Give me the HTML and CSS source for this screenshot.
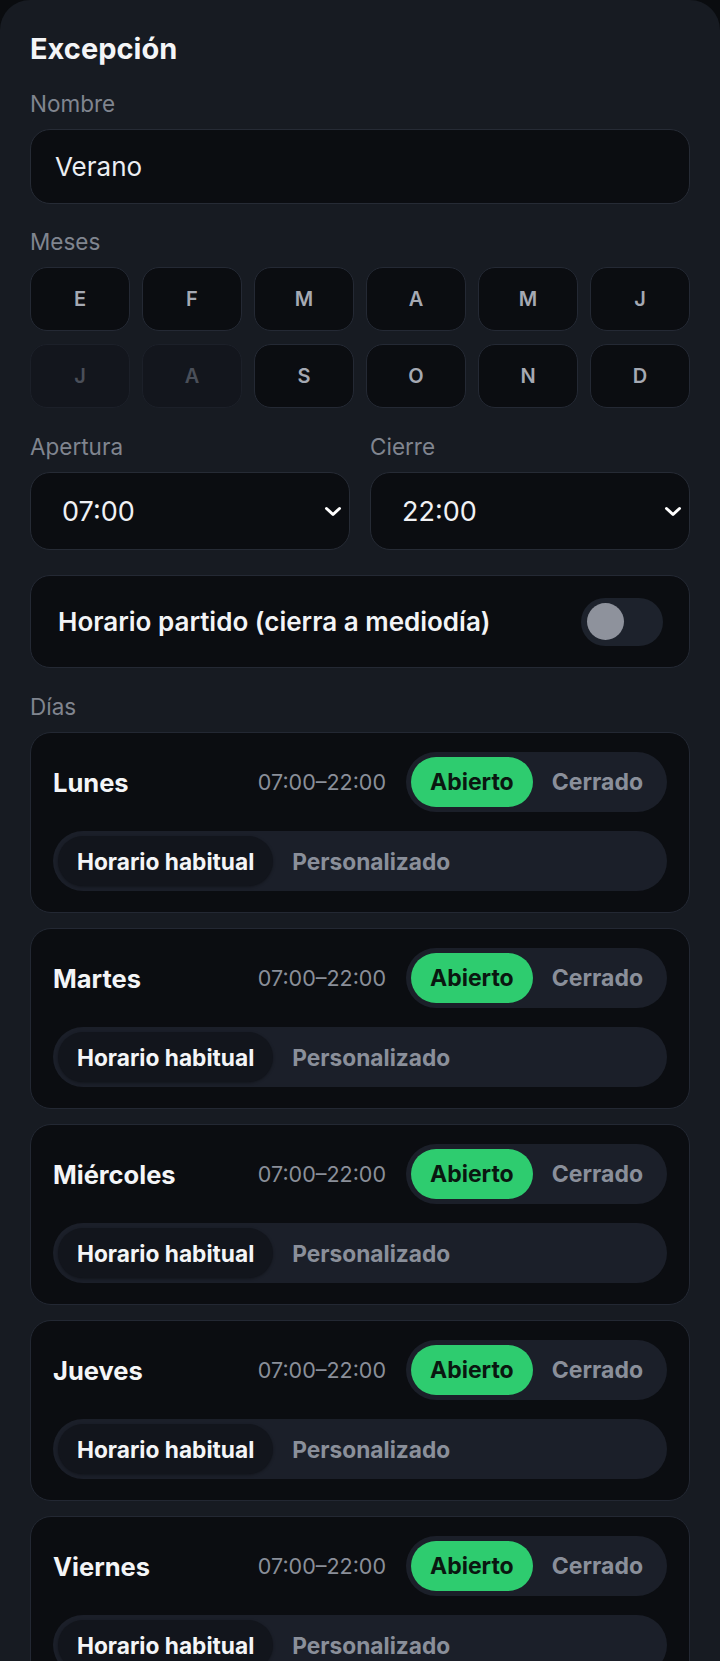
FILE: index.html
```html
<!DOCTYPE html>
<html lang="es">
<head>
    <meta charset="utf-8">
    <title>Excepción</title>
    <link rel="stylesheet" href="styles.css">
</head>
<body>
    <div class="screen">
        <section class="sheet">
            <h2 class="sheet-title">Excepción</h2>

            <div class="field">
                <div class="field-label">Nombre</div>
                <div class="text-input">Verano</div>
            </div>

            <div class="field">
                <div class="field-label">Meses</div>
                <div class="month-grid">
                    <button class="month">E</button>
                    <button class="month">F</button>
                    <button class="month">M</button>
                    <button class="month">A</button>
                    <button class="month">M</button>
                    <button class="month">J</button>
                    <button class="month off">J</button>
                    <button class="month off">A</button>
                    <button class="month">S</button>
                    <button class="month">O</button>
                    <button class="month">N</button>
                    <button class="month">D</button>
                </div>
            </div>

            <div class="field time-row">
                <div class="time-col">
                    <div class="field-label">Apertura</div>
                    <div class="select">
                        <span>07:00</span>
                        <svg class="chevron" width="18" height="11" viewBox="0 0 18 11"><path d="M2.5 2.5 L9 8.5 L15.5 2.5" fill="none" stroke="#fff" stroke-width="3" stroke-linecap="round" stroke-linejoin="round"/></svg>
                    </div>
                </div>
                <div class="time-col">
                    <div class="field-label">Cierre</div>
                    <div class="select">
                        <span>22:00</span>
                        <svg class="chevron" width="18" height="11" viewBox="0 0 18 11"><path d="M2.5 2.5 L9 8.5 L15.5 2.5" fill="none" stroke="#fff" stroke-width="3" stroke-linecap="round" stroke-linejoin="round"/></svg>
                    </div>
                </div>
            </div>

            <div class="field switch-card">
                <span>Horario partido (cierra a mediodía)</span>
                <span class="switch"><span class="knob"></span></span>
            </div>

            <div class="field days">
                <div class="field-label">Días</div>
                <div class="day-list">
                    <div class="day-card">
                        <div class="day-head">
                            <span class="day-name">Lunes</span>
                            <span class="day-hours">07:00–22:00</span>
                            <div class="seg">
                                <span class="seg-opt open">Abierto</span>
                                <span class="seg-opt">Cerrado</span>
                            </div>
                        </div>
                        <div class="seg seg-wide">
                            <span class="seg-opt on">Horario habitual</span>
                            <span class="seg-opt">Personalizado</span>
                        </div>
                    </div>
                    <div class="day-card">
                        <div class="day-head">
                            <span class="day-name">Martes</span>
                            <span class="day-hours">07:00–22:00</span>
                            <div class="seg">
                                <span class="seg-opt open">Abierto</span>
                                <span class="seg-opt">Cerrado</span>
                            </div>
                        </div>
                        <div class="seg seg-wide">
                            <span class="seg-opt on">Horario habitual</span>
                            <span class="seg-opt">Personalizado</span>
                        </div>
                    </div>
                    <div class="day-card">
                        <div class="day-head">
                            <span class="day-name">Miércoles</span>
                            <span class="day-hours">07:00–22:00</span>
                            <div class="seg">
                                <span class="seg-opt open">Abierto</span>
                                <span class="seg-opt">Cerrado</span>
                            </div>
                        </div>
                        <div class="seg seg-wide">
                            <span class="seg-opt on">Horario habitual</span>
                            <span class="seg-opt">Personalizado</span>
                        </div>
                    </div>
                    <div class="day-card">
                        <div class="day-head">
                            <span class="day-name">Jueves</span>
                            <span class="day-hours">07:00–22:00</span>
                            <div class="seg">
                                <span class="seg-opt open">Abierto</span>
                                <span class="seg-opt">Cerrado</span>
                            </div>
                        </div>
                        <div class="seg seg-wide">
                            <span class="seg-opt on">Horario habitual</span>
                            <span class="seg-opt">Personalizado</span>
                        </div>
                    </div>
                    <div class="day-card">
                        <div class="day-head">
                            <span class="day-name">Viernes</span>
                            <span class="day-hours">07:00–22:00</span>
                            <div class="seg">
                                <span class="seg-opt open">Abierto</span>
                                <span class="seg-opt">Cerrado</span>
                            </div>
                        </div>
                        <div class="seg seg-wide">
                            <span class="seg-opt on">Horario habitual</span>
                            <span class="seg-opt">Personalizado</span>
                        </div>
                    </div>
                </div>
            </div>
        </section>
    </div>
</body>
</html>
```

FILE: styles.css
```css
html, body {
    margin: 0;
    padding: 0;
    background: #0a0c0f;
}
body {
    font-family: 'Inter', 'Roboto', sans-serif;
    color: #f2f3f5;
}
.screen {
    height: 1661px;
    overflow: hidden;
}
.sheet {
    min-height: 100%;
    box-sizing: border-box;
    background: #171b22;
    border-radius: 30px 30px 0 0;
    padding: 32px 30px 0;
}
.sheet-title {
    margin: 0;
    font-size: 29px;
    line-height: 34px;
    font-weight: 700;
    color: #f4f5f7;
}
.field {
    margin-top: 26px;
}
.field-label {
    font-size: 22.5px;
    line-height: 24px;
    color: #80858f;
    margin-bottom: 13px;
}
.text-input {
    height: 75px;
    box-sizing: border-box;
    display: flex;
    align-items: center;
    padding: 0 24px;
    background: #0b0d11;
    border: 1px solid #262b35;
    border-radius: 20px;
    font-size: 26px;
    color: #eceef2;
}
/* Months */
.month-grid {
    display: grid;
    grid-template-columns: repeat(6, 1fr);
    gap: 13px 12px;
}
.month {
    height: 64px;
    padding: 0;
    background: #0b0d11;
    border: 1px solid #242934;
    border-radius: 17px;
    font-family: inherit;
    font-size: 20px;
    font-weight: 600;
    color: #a5a9b3;
}
.month.off {
    background: #13161d;
    border-color: #1c2029;
    color: #4a4f59;
}
/* Opening / closing */
.time-row {
    margin-top: 27px;
    display: grid;
    grid-template-columns: 1fr 1fr;
    gap: 20px;
}
.select {
    height: 78px;
    box-sizing: border-box;
    display: flex;
    align-items: center;
    justify-content: space-between;
    padding: 0 7px 0 31px;
    background: #0b0d11;
    border: 1px solid #262b35;
    border-radius: 20px;
    font-size: 27px;
    color: #f0f1f4;
}
.switch-card {
    margin-top: 25px;
    height: 93px;
    box-sizing: border-box;
    display: flex;
    align-items: center;
    justify-content: space-between;
    padding: 0 26px 0 27px;
    background: #0b0d11;
    border: 1px solid #242934;
    border-radius: 20px;
    font-size: 26px;
    font-weight: 600;
    color: #f3f4f6;
}
.switch {
    width: 82px;
    height: 48px;
    border-radius: 24px;
    background: #1d222c;
    display: flex;
    align-items: center;
    padding-left: 6px;
    box-sizing: border-box;
}
.knob {
    width: 37px;
    height: 37px;
    border-radius: 50%;
    background: #8e929c;
}
/* Days */
.days {
    margin-top: 27px;
}
.day-list {
    display: flex;
    flex-direction: column;
    gap: 15px;
}
.day-card {
    display: flex;
    flex-direction: column;
    gap: 19px;
    padding: 19px 22px 21px;
    background: #0b0d11;
    border: 1px solid #232833;
    border-radius: 21px;
}
.day-head {
    display: flex;
    align-items: center;
    gap: 20px;
}
.day-name {
    flex: 1;
    font-size: 25.5px;
    font-weight: 700;
    color: #f4f5f7;
}
.day-hours {
    font-size: 21.5px;
    color: #8a8f99;
}
.seg {
    display: flex;
    padding: 5px;
    background: #1b1f29;
    border-radius: 30px;
}
.seg-opt {
    height: 50px;
    display: flex;
    align-items: center;
    padding: 0 19px;
    border-radius: 25px;
    font-size: 23px;
    font-weight: 700;
    color: #8a8f9a;
}
.seg-wide .seg-opt {
    font-size: 22.7px;
}
.seg-opt.open {
    background: #2ecc6f;
    color: #0a1710;
}
.seg-opt.on {
    background: #12151c;
    color: #f4f5f7;
    box-shadow: 0 1px 3px rgba(0, 0, 0, 0.35);
}
```
